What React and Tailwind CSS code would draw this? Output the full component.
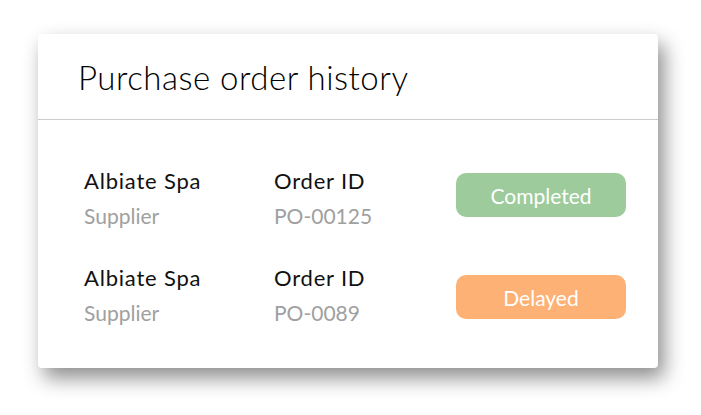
export default function App() {
  const rows = [
    { name: "Albiate Spa", id: "PO-00125", status: "Completed", color: "bg-[#9dcb9b]", mt: "mt-[10px]" },
    { name: "Albiate Spa", id: "PO-0089", status: "Delayed", color: "bg-[#fdb174]", mt: "mt-[15px]" },
  ];
  return (
    <div className="w-[701px] h-[415px] bg-white pl-[38px] pt-[34px]" style={{ fontFamily: "Lato, 'Open Sans', sans-serif" }}>
      <div className="w-[620px] h-[334px] bg-white rounded-[4px] shadow-[6px_10px_20px_rgba(0,0,0,0.45)] flex flex-col">
        <div className="h-[86px] flex items-center pl-[40px] pt-[2px] border-b border-[#cccccc]">
          <h1 className="text-[33px] font-light text-black leading-none tracking-[0.5px]">Purchase order history</h1>
        </div>
        <div className="flex flex-col gap-[27px] pt-[43px] pl-[46px] pr-[32px]">
          {rows.map((r, i) => (
            <div key={i} className="flex items-start">
              <div className="w-[190px] flex flex-col leading-[35px]">
                <span className="text-[#111111] text-[22px] tracking-[0.8px]">{r.name}</span>
                <span className="text-[#a0a0a0] text-[21px]">Supplier</span>
              </div>
              <div className="w-[182px] flex flex-col leading-[35px]">
                <span className="text-[#111111] text-[22px] tracking-[0.8px]">Order ID</span>
                <span className="text-[#a0a0a0] text-[21px]">{r.id}</span>
              </div>
              <div className={`w-[170px] h-[44px] rounded-[10px] ${r.color} ${r.mt} flex items-center justify-center pt-[2px] text-white text-[21px]`}>
                {r.status}
              </div>
            </div>
          ))}
        </div>
      </div>
    </div>
  );
}
